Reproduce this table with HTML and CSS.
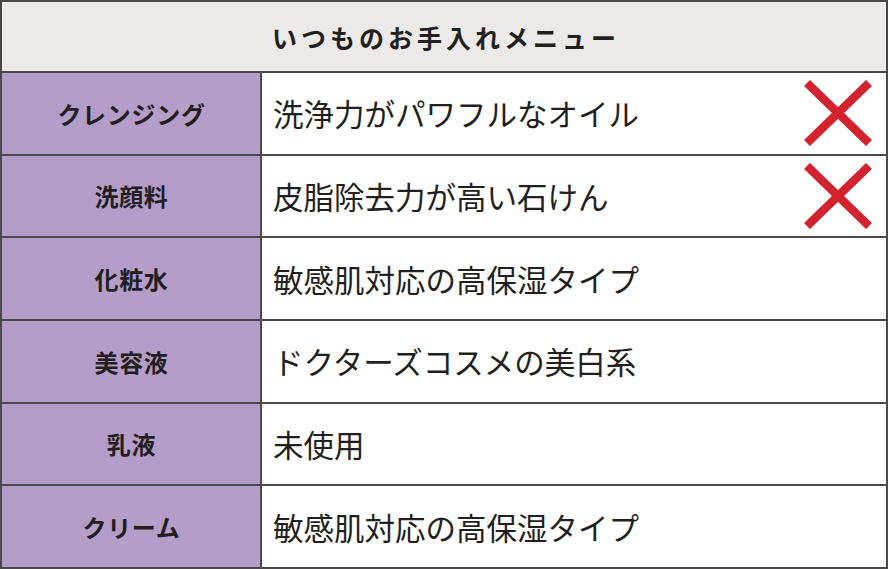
FILE: index.html
```html
<!DOCTYPE html>
<html lang="ja">
<head>
<meta charset="utf-8">
<link rel="stylesheet" href="styles.css">
</head>
<body>
<div class="menu">
  <div class="head">いつものお手入れメニュー</div>
  <div class="label">クレンジング</div>
  <div class="value"><span>洗浄力がパワフルなオイル</span><svg class="ng" viewBox="0 0 68 66" width="68" height="66"><path d="M3 3 L65 63 M65 3 L3 63" stroke="#d2232f" stroke-width="8.5" fill="none"/></svg></div>
  <div class="label">洗顔料</div>
  <div class="value"><span>皮脂除去力が高い石けん</span><svg class="ng" viewBox="0 0 68 66" width="68" height="66"><path d="M3 3 L65 63 M65 3 L3 63" stroke="#d2232f" stroke-width="8.5" fill="none"/></svg></div>
  <div class="label">化粧水</div>
  <div class="value"><span>敏感肌対応の高保湿タイプ</span></div>
  <div class="label">美容液</div>
  <div class="value"><span>ドクターズコスメの美白系</span></div>
  <div class="label">乳液</div>
  <div class="value"><span>未使用</span></div>
  <div class="label">クリーム</div>
  <div class="value"><span>敏感肌対応の高保湿タイプ</span></div>
</div>
</body>
</html>
```
FILE: styles.css
```css
html, body {
  margin: 0;
  padding: 0;
  background: #ffffff;
}
.menu {
  box-sizing: border-box;
  width: 888px;
  height: 569px;
  border: 2px solid #4a4848;
  background: #4a4848;
  display: grid;
  grid-template-columns: 258px 1fr;
  grid-template-rows: 69px repeat(6, 1fr);
  gap: 2px;
  font-family: "Noto Sans CJK JP", "Noto Sans", sans-serif;
  color: #231f20;
}
.head {
  grid-column: 1 / 3;
  background: #ebeae8;
  display: flex;
  align-items: center;
  justify-content: center;
  font-size: 25px;
  font-weight: 700;
  letter-spacing: 4px;
  padding-left: 4px;
}
.label {
  background: #b49dc9;
  display: flex;
  align-items: center;
  justify-content: center;
  font-size: 24px;
  font-weight: 700;
  letter-spacing: 0.7px;
  padding-left: 1px;
}
.value {
  background: #ffffff;
  display: flex;
  align-items: center;
  justify-content: space-between;
  padding: 0 14px 0 11px;
  font-size: 30.5px;
  font-weight: 400;
}
.ng {
  display: block;
  flex: none;
}
```
